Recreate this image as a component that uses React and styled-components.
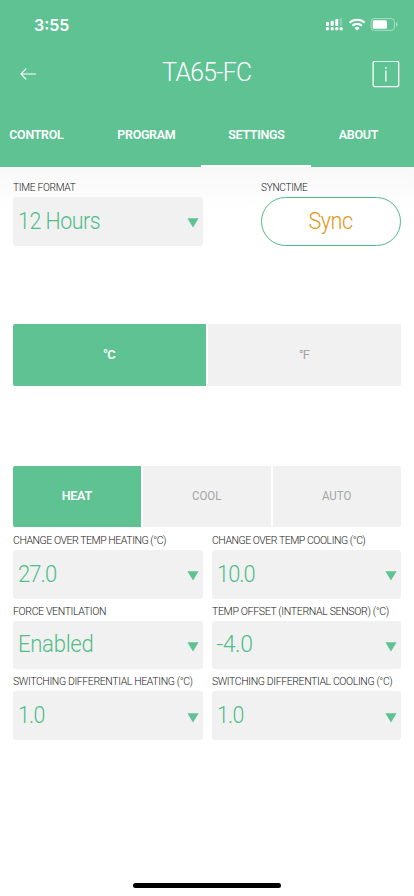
import React from "react";
import styled, { createGlobalStyle } from "styled-components";

const GREEN = "#5ec293";
const FONT = 'Roboto, "Liberation Sans", sans-serif';

const GlobalStyle = createGlobalStyle`
  * { box-sizing: border-box; }
  body { margin: 0; background: #fff; }
  button { font: inherit; }
`;

const Screen = styled.div`
  width: 414px;
  height: 896px;
  overflow: hidden;
  display: flex;
  flex-direction: column;
  background: #fff;
  font-family: ${FONT};
`;

const Header = styled.header`
  flex: none;
  height: 167.4px;
  display: flex;
  flex-direction: column;
  background: ${GREEN};
  color: #fff;
`;

const StatusBar = styled.div`
  height: 48px;
  padding: 2px 16px 0 34px;
  display: flex;
  align-items: center;
  justify-content: space-between;
`;

const Clock = styled.span`
  font: 600 16px/20px Inter, sans-serif;
  letter-spacing: 0;
`;

const StatusIcons = styled.svg`
  display: block;
  margin-top: -2px;
`;

const TitleBar = styled.div`
  height: 54px;
  padding: 0 14px 0 20px;
  display: grid;
  grid-template-columns: 28px 1fr 28px;
  align-items: center;
`;

const Condensed = styled.span`
  display: inline-block;
  transform: scaleX(${(p) => p.$scale || 1});
  transform-origin: ${(p) => p.$origin || "center"};
`;

const Title = styled.h1`
  margin: 0;
  padding-right: 6px;
  text-align: center;
  font-size: 26px;
  line-height: 30px;
  font-weight: 300;
  letter-spacing: -0.7px;
  transform: translateY(-3px);
`;

const IconButton = styled.button`
  padding: 0;
  border: 0;
  background: none;
  color: inherit;
  width: 28px;
  height: 28px;
  svg { display: block; }
`;

const Tabs = styled.nav`
  height: 65px;
  margin-left: -19px;
  display: flex;
`;

const Tab = styled.button`
  flex: none;
  width: ${(p) => p.$w || 110}px;
  height: 65.4px;
  padding: 2px 0 0 1px;
  border: 0;
  border-bottom: 2px solid ${(p) => (p.$active ? "#fff" : "transparent")};
  background: none;
  color: #fff;
  && { font-size: 13px; font-weight: 600; }
  letter-spacing: -0.3px;
`;

const Content = styled.main`
  flex: 1;
  padding: 13.6px 13px 0;
  background: linear-gradient(#f8f8f8, #fff 45px);
`;

const Fields = styled.div`
  display: grid;
  grid-template-columns: ${(p) => p.$cols};
  justify-content: space-between;
  row-gap: 6px;
`;

const Field = styled.div`
  height: 64.6px;
  display: flex;
  flex-direction: column;
`;

const Label = styled.span`
  height: 16px;
  font-size: 11px;
  line-height: 14px;
  font-weight: 300;
  white-space: nowrap;
  color: #222;
  letter-spacing: ${(p) => p.$track || 0}px;
`;

const Select = styled.button`
  height: 48.6px;
  padding: 0 4px 0 5px;
  display: flex;
  align-items: center;
  justify-content: space-between;
  border: 0;
  border-radius: 3px;
  background: #f1f1f1;
  color: #50bd8a;
  && { font-size: 23px; font-weight: 300; }
  letter-spacing: ${(p) => p.$track || 0}px;
  svg { margin-top: 4px; }
`;

const SyncButton = styled.button`
  height: 48.6px;
  border: 1.3px solid #4fba88;
  border-radius: 25px;
  background: #fff;
  color: #df9920;
  && { font-size: 23px; font-weight: 300; }
  letter-spacing: -0.5px;
`;

const Segments = styled.div`
  display: grid;
  grid-template-columns: repeat(${(p) => p.$n}, 1fr);
  gap: 2px;
  height: 61.5px;
  margin: ${(p) => p.$margin};
  border-radius: 2px;
  overflow: hidden;
`;

const Segment = styled.button`
  border: 0;
  padding: 0 1px 2px 0;
  background: ${(p) => (p.$active ? GREEN : "#f1f1f1")};
  color: ${(p) => (p.$active ? "#fff" : "#a3a5a6")};
  && { font-size: 13px; font-weight: ${(p) => (p.$active ? 600 : 400)}; }
  letter-spacing: ${(p) => p.$track || 0}px;
`;

const HomeBar = styled.div`
  flex: none;
  width: 148px;
  height: 5px;
  margin: 0 0 8px 133px;
  border-radius: 3px;
  background: #000;
`;

function Status() {
  return (
    <StatusIcons width="73" height="16" viewBox="0 0 73 16" fill="#fff">
      <rect x="1" y="6" width="3" height="4" rx="1" />
      <rect x="5.7" y="4.8" width="3" height="5.2" rx="1" />
      <rect x="10.3" y="3" width="3" height="7" rx="1" />
      <rect x="14.7" y="1.7" width="2.5" height="8.3" rx="1" opacity=".25" />
      {[2.5, 7.2, 11.8, 16.2].map((x) => (
        <circle key={x} cx={x} cy="12.8" r="1.7" />
      ))}
      <g fill="none" stroke="#fff" strokeWidth="2.1">
        <path d="M24.6 6.7a11.2 11.2 0 0 1 15.1 0" />
        <path d="M27.4 9.7a7 7 0 0 1 9.5 0" />
      </g>
      <path d="M29.6 11.9a3.7 3.7 0 0 1 5.1 0l-2.55 2.7z" />
      <rect x="46" y="2.6" width="23.5" height="11.8" rx="3.3" fill="none" stroke="#fff" strokeOpacity=".45" />
      <rect x="47.7" y="4.2" width="14.3" height="8.6" rx="1.5" />
      <path d="M71 6.3c1.9.5 1.9 3.9 0 4.4z" opacity=".5" />
    </StatusIcons>
  );
}

function Caret() {
  return (
    <svg width="12" height="10" viewBox="0 0 12 10" fill={GREEN}>
      <path d="M.4.3h11.2L6 9.6z" />
    </svg>
  );
}

function SelectField({ label, labelTrack, labelScale, value, track, scale }) {
  return (
    <Field>
      <Label $track={labelTrack}>
        <Condensed $scale={labelScale} $origin="left">{label}</Condensed>
      </Label>
      <Select $track={track}>
        <Condensed $scale={scale} $origin="left">{value}</Condensed>
        <Caret />
      </Select>
    </Field>
  );
}

const settings = [
  { label: "CHANGE OVER TEMP HEATING (°C)", labelTrack: -0.5, labelScale: 0.96, value: "27.0", track: -1, scale: 0.96 },
  { label: "CHANGE OVER TEMP COOLING (°C)", labelTrack: -0.5, labelScale: 0.956, value: "10.0", track: -1, scale: 0.95 },
  { label: "FORCE VENTILATION", labelTrack: -0.4, labelScale: 0.96, value: "Enabled", track: -0.3, scale: 0.96 },
  { label: "TEMP OFFSET (INTERNAL SENSOR) (°C)", labelTrack: -0.4, labelScale: 0.965, value: "-4.0", track: -0.4, scale: 1 },
  { label: "SWITCHING DIFFERENTIAL HEATING (°C)", labelTrack: -0.4, labelScale: 0.955, value: "1.0", track: -0.8, scale: 0.93 },
  { label: "SWITCHING DIFFERENTIAL COOLING (°C)", labelTrack: -0.4, labelScale: 0.953, value: "1.0", track: -0.8, scale: 0.93 },
];

export default function App() {
  return (
    <Screen>
      <GlobalStyle />
      <Header>
        <StatusBar>
          <Clock>3:55</Clock>
          <Status />
        </StatusBar>
        <TitleBar>
          <IconButton aria-label="Back">
            <svg width="28" height="28" viewBox="0 0 28 28" fill="none" stroke="#fff" strokeWidth="1.2">
              <path d="M16 13H1M6.2 7.6 1 13l5.2 5.4" />
            </svg>
          </IconButton>
          <Title>
            <Condensed $scale={0.95}>TA65-FC</Condensed>
          </Title>
          <IconButton aria-label="Information">
            <svg width="28" height="28" viewBox="0 0 28 28" fill="none" stroke="#fff" strokeWidth="1.3">
              <rect x="1.1" y=".1" width="25.6" height="25.6" rx="2" />
              <path d="M13.9 9.4v11M13.9 6.1v1.7" />
            </svg>
          </IconButton>
        </TitleBar>
        <Tabs>
          <Tab><Condensed $scale={0.955}>CONTROL</Condensed></Tab>
          <Tab><Condensed $scale={0.955}>PROGRAM</Condensed></Tab>
          <Tab $active><Condensed $scale={0.96}>SETTINGS</Condensed></Tab>
          <Tab $w={94}><Condensed $scale={0.96}>ABOUT</Condensed></Tab>
        </Tabs>
      </Header>
      <Content>
        <Fields $cols="190px 140px">
          <SelectField label="TIME FORMAT" labelTrack={-0.3} labelScale={0.925} value="12 Hours" track={-0.5} scale={0.93} />
          <Field>
            <Label $track={-0.3}>
              <Condensed $scale={0.915} $origin="left">SYNCTIME</Condensed>
            </Label>
            <SyncButton>
              <Condensed $scale={0.94}>Sync</Condensed>
            </SyncButton>
          </Field>
        </Fields>
        <Segments $n={2} $margin="78.9px 0 0">
          <Segment $active $track={-0.8}>°C</Segment>
          <Segment $track={-0.8}>°F</Segment>
        </Segments>
        <Segments $n={3} $margin="79.6px 0 7px">
          <Segment $active $track={-0.2}><Condensed $scale={0.96}>HEAT</Condensed></Segment>
          <Segment><Condensed $scale={0.88}>COOL</Condensed></Segment>
          <Segment><Condensed $scale={0.88}>AUTO</Condensed></Segment>
        </Segments>
        <Fields $cols="190px 189.5px">
          {settings.map((s) => (
            <SelectField key={s.label} {...s} />
          ))}
        </Fields>
      </Content>
      <HomeBar />
    </Screen>
  );
}
